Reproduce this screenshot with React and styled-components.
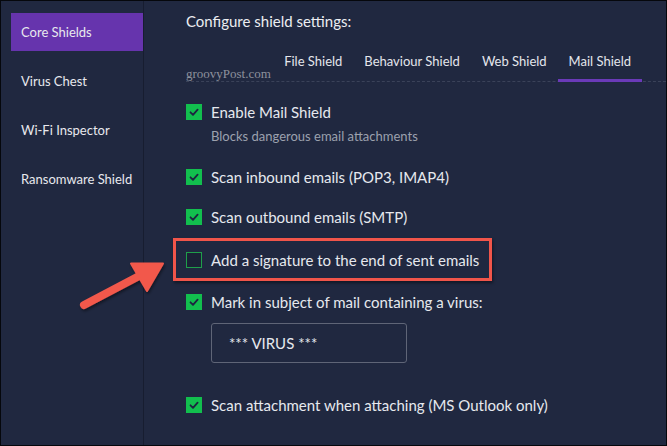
import React from "react";
import styled, { createGlobalStyle } from "styled-components";

const Global = createGlobalStyle`
  html, body { margin: 0; padding: 0; background: #202840; }
  * { box-sizing: border-box; }
`;

const Frame = styled.div`
  position: relative;
  width: 667px;
  height: 446px;
  border: 1px solid #05070c;
  background: #202840;
  display: grid;
  grid-template-columns: 142px 1px 1fr;
  font-family: Lato, "Liberation Sans", sans-serif;
  color: #e6e8ee;
  overflow: hidden;
`;

const Sidebar = styled.nav`
  display: flex;
  flex-direction: column;
  gap: 11px;
  padding: 12px 0 0 10px;
`;

const NavItem = styled.div`
  height: 38px;
  display: flex;
  align-items: center;
  padding-left: 10px;
  font-size: 13px;
  color: #e8e9ee;
  background: ${(p) => (p.$active ? "#6634ad" : "transparent")};
`;

const Divider = styled.div`
  background: #171d30;
`;

const Main = styled.main`
  position: relative;
  display: flex;
  flex-direction: column;
  padding-left: 42px;
`;

const Title = styled.h1`
  margin: 0;
  padding-top: 10px;
  font-size: 15px;
  line-height: 20px;
  font-weight: 400;
  color: #eceef2;
`;

const TabBar = styled.div`
  position: relative;
  margin-top: 9px;
  height: 42px;
  display: flex;
  justify-content: flex-end;
  padding-right: 24px;
  border-bottom: 1px dashed #3a4259;
`;

const Tab = styled.div`
  position: relative;
  padding: 13px 11px 0;
  font-size: 13px;
  line-height: 16px;
  color: #e4e6ec;
  &::after {
    content: "";
    position: absolute;
    left: 0;
    right: 0;
    bottom: -1px;
    height: 3px;
    background: ${(p) => (p.$active ? "#6a3ab8" : "transparent")};
  }
`;

const Watermark = styled.span`
  position: absolute;
  left: 0;
  bottom: -1px;
  font-family: "Liberation Serif", serif;
  font-size: 13px;
  line-height: 16px;
  color: #8d919c;
`;

const Options = styled.div`
  display: flex;
  flex-direction: column;
`;

const Row = styled.label`
  position: relative;
  height: 24px;
  display: flex;
  align-items: center;
  gap: 9px;
  margin-top: ${(p) => p.$top}px;
  font-size: 15px;
  color: #e6e8ee;
`;

const Box = styled.span`
  width: 16px;
  height: 16px;
  flex: none;
  display: flex;
  align-items: center;
  justify-content: center;
  background: ${(p) => (p.$checked ? "#12bf4e" : "#1b2236")};
  border: ${(p) => (p.$checked ? "none" : "1px solid #1f9f4a")};
`;

const Description = styled.div`
  margin: 4px 0 0 25px;
  font-size: 13px;
  line-height: 16px;
  color: #9ca1ae;
`;

const Highlight = styled.span`
  position: absolute;
  left: -13px;
  top: -10px;
  width: 319px;
  height: 43px;
  border: 3px solid #f1554a;
  box-shadow: 1px 2px 3px rgba(0, 0, 0, 0.45);
  pointer-events: none;
`;

const TextInput = styled.div`
  margin: 9px 0 0 25px;
  width: 196px;
  height: 40px;
  border: 1px solid #5f6577;
  border-radius: 3px;
  display: flex;
  align-items: center;
  padding-left: 17px;
  font-size: 15px;
  color: #e6e8ee;
`;

const ArrowLayer = styled.svg`
  position: absolute;
  left: 0;
  top: 0;
  pointer-events: none;
`;

function Check({ checked }) {
  return (
    <Box $checked={checked}>
      {checked && (
        <svg width="16" height="16" viewBox="0 0 16 16">
          <path
            d="M4.5 8.3 L7 10.8 L11.6 5.6"
            fill="none"
            stroke="#1d2540"
            strokeWidth="1.8"
            strokeLinecap="round"
            strokeLinejoin="round"
          />
        </svg>
      )}
    </Box>
  );
}

function Option({ checked, top, children, highlight }) {
  return (
    <Row $top={top}>
      {highlight && <Highlight />}
      <Check checked={checked} />
      <span>{children}</span>
    </Row>
  );
}

export default function App() {
  return (
    <>
      <Global />
      <Frame>
        <Sidebar>
          <NavItem $active>Core Shields</NavItem>
          <NavItem>Virus Chest</NavItem>
          <NavItem>Wi-Fi Inspector</NavItem>
          <NavItem>Ransomware Shield</NavItem>
        </Sidebar>
        <Divider />
        <Main>
          <Title>Configure shield settings:</Title>
          <TabBar>
            <Watermark>groovyPost.com</Watermark>
            <Tab>File Shield</Tab>
            <Tab>Behaviour Shield</Tab>
            <Tab>Web Shield</Tab>
            <Tab $active>Mail Shield</Tab>
          </TabBar>
          <Options>
            <Option checked top={18}>Enable Mail Shield</Option>
            <Description>Blocks dangerous email attachments</Description>
            <Option checked top={21}>Scan inbound emails (POP3, IMAP4)</Option>
            <Option checked top={16}>Scan outbound emails (SMTP)</Option>
            <Option top={19} highlight>Add a signature to the end of sent emails</Option>
            <Option checked top={18}>Mark in subject of mail containing a virus:</Option>
            <TextInput>*** VIRUS ***</TextInput>
            <Option checked top={30}>Scan attachment when attaching (MS Outlook only)</Option>
          </Options>
        </Main>
        <ArrowLayer width="667" height="446" viewBox="0 0 667 446">
          <defs>
            <filter id="sh" x="-20%" y="-20%" width="140%" height="140%">
              <feDropShadow dx="1" dy="2" stdDeviation="1.5" floodColor="#000" floodOpacity="0.45" />
            </filter>
          </defs>
          <g filter="url(#sh)" fill="#f2594b" stroke="#f2594b">
            <line x1="83" y1="304" x2="140" y2="274" strokeWidth="8" strokeLinecap="round" />
            <path d="M130 262.5 L162 262.5 L146 290 Z" strokeWidth="2" strokeLinejoin="round" />
          </g>
        </ArrowLayer>
      </Frame>
    </>
  );
}
